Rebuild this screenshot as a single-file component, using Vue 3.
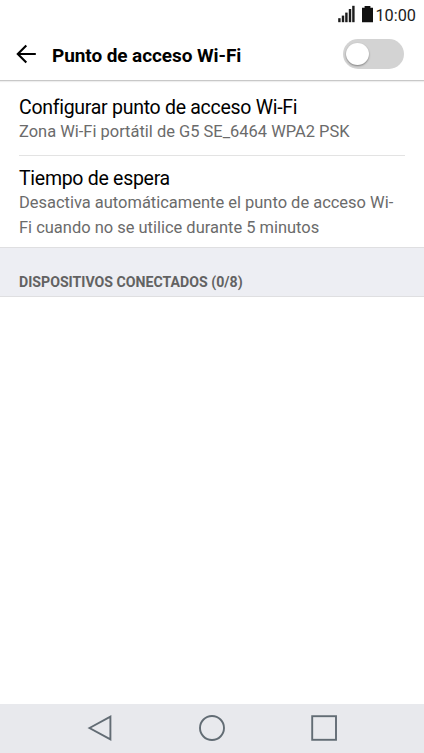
<script setup>
const items = [
  { title: 'Configurar punto de acceso Wi-Fi', lines: ['Zona Wi-Fi portátil de G5 SE_6464 WPA2 PSK'] },
  {
    title: 'Tiempo de espera',
    lines: ['Desactiva automáticamente el punto de acceso Wi-', 'Fi cuando no se utilice durante 5 minutos'],
  },
]
</script>

<template>
  <div class="screen">
    <div class="status">
      <svg class="signal" width="18" height="18" viewBox="0 0 18 18" fill="#1c1c1c">
        <rect x="0.2" y="13.2" width="2.4" height="4" />
        <rect x="3.8" y="10.6" width="2.4" height="6.6" />
        <rect x="7.2" y="7.6" width="2.4" height="9.6" />
        <rect x="10.8" y="4" width="2.4" height="13.2" />
        <rect x="14.2" y="0.8" width="2.4" height="16.4" />
      </svg>
      <svg class="battery" width="11" height="18" viewBox="0 0 11 18" fill="#111">
        <path d="M2.6 1h5.8v1.8H11V17.3H0V2.8h2.6z" />
      </svg>
      <span class="time">10:00</span>
    </div>
    <header class="bar">
      <svg class="back" width="22" height="20" viewBox="0 0 22 20" fill="none" stroke="#000" stroke-width="2.1">
        <path d="M20.8 10H3M11.3 1.6L2.8 10l8.5 8.4" />
      </svg>
      <h1>Punto de acceso Wi-Fi</h1>
      <div class="toggle"><div class="thumb"></div></div>
    </header>
    <main>
      <section v-for="item in items" :key="item.title" class="item">
        <h2>{{ item.title }}</h2>
        <p v-for="line in item.lines" :key="line">{{ line }}</p>
      </section>
      <div class="group">DISPOSITIVOS CONECTADOS (0/8)</div>
    </main>
    <nav class="nav">
      <svg width="28" height="28" viewBox="0 0 28 28"><path d="M3.5 14L24.4 2.7v22.6z" /></svg>
      <svg width="28" height="28" viewBox="0 0 28 28"><circle cx="14" cy="14" r="12" /></svg>
      <svg width="28" height="28" viewBox="0 0 28 28"><rect x="2.2" y="2.2" width="23.8" height="23.6" /></svg>
    </nav>
  </div>
</template>

<style>
body {
  margin: 0;
  background: #fff;
}
</style>

<style scoped>
.screen {
  width: 424px;
  height: 753px;
  display: flex;
  flex-direction: column;
  background: #fff;
  color: #000;
  font-family: Roboto, "Liberation Sans", sans-serif;
  overflow: hidden;
}
.status {
  height: 29px;
  flex: none;
  display: flex;
  box-sizing: border-box;
  padding: 5px 8px 0 0;
  justify-content: flex-end;
}
.battery {
  margin-left: 6px;
}
.time {
  margin: 1px 0 0 2px;
  font-size: 16.3px;
  line-height: 20px;
  color: #1c1c1c;
  white-space: nowrap;
}
.bar {
  height: 52px;
  flex: none;
  display: flex;
  align-items: center;
  box-sizing: border-box;
  padding: 0 20px 1px 15px;
  border-bottom: 1px solid #c8c8c8;
  box-shadow: 0 1px 1px #eee;
}
.back {
  margin-top: -1px;
}
h1 {
  margin: 4px 0 0 15px;
  font-size: 19px;
  line-height: 24px;
  font-weight: 700;
  letter-spacing: -0.08px;
  white-space: nowrap;
}
.toggle {
  margin-left: auto;
  width: 61px;
  height: 30px;
  box-sizing: border-box;
  padding: 4px 3px;
  border-radius: 15px;
  background: #d3d3d3;
}
.thumb {
  width: 23px;
  height: 22px;
  border-radius: 50%;
  background: #fff;
  box-shadow: 0 1px 2px rgba(0, 0, 0, 0.4);
}
.item {
  margin: 0 19px;
  box-sizing: border-box;
  padding-top: 15px;
  height: 74px;
  white-space: nowrap;
}
.item + .item {
  padding-top: 11px;
  height: 92px;
  border-top: 1px solid #e3e3e3;
}
h2 {
  margin: 0;
  font-size: 19.5px;
  line-height: 24px;
  font-weight: 400;
  letter-spacing: -0.28px;
}
p {
  margin: 0;
  font-size: 16.47px;
  line-height: 24.5px;
  color: #6b6b6b;
}
.group {
  height: 50px;
  box-sizing: border-box;
  padding: 24px 19px 0;
  border-top: 1px solid #dfdfe1;
  border-bottom: 1px solid #dfdfe1;
  background: #edeef3;
  color: #626262;
  font-size: 14.15px;
  line-height: 20px;
  font-weight: 700;
}
.nav {
  margin-top: auto;
  height: 49px;
  flex: none;
  display: flex;
  box-sizing: border-box;
  padding-bottom: 1px;
  align-items: center;
  justify-content: center;
  gap: 84px;
  background: #e8e9ed;
}
.nav svg {
  fill: none;
  stroke: #626c74;
  stroke-width: 1.9;
}
</style>
